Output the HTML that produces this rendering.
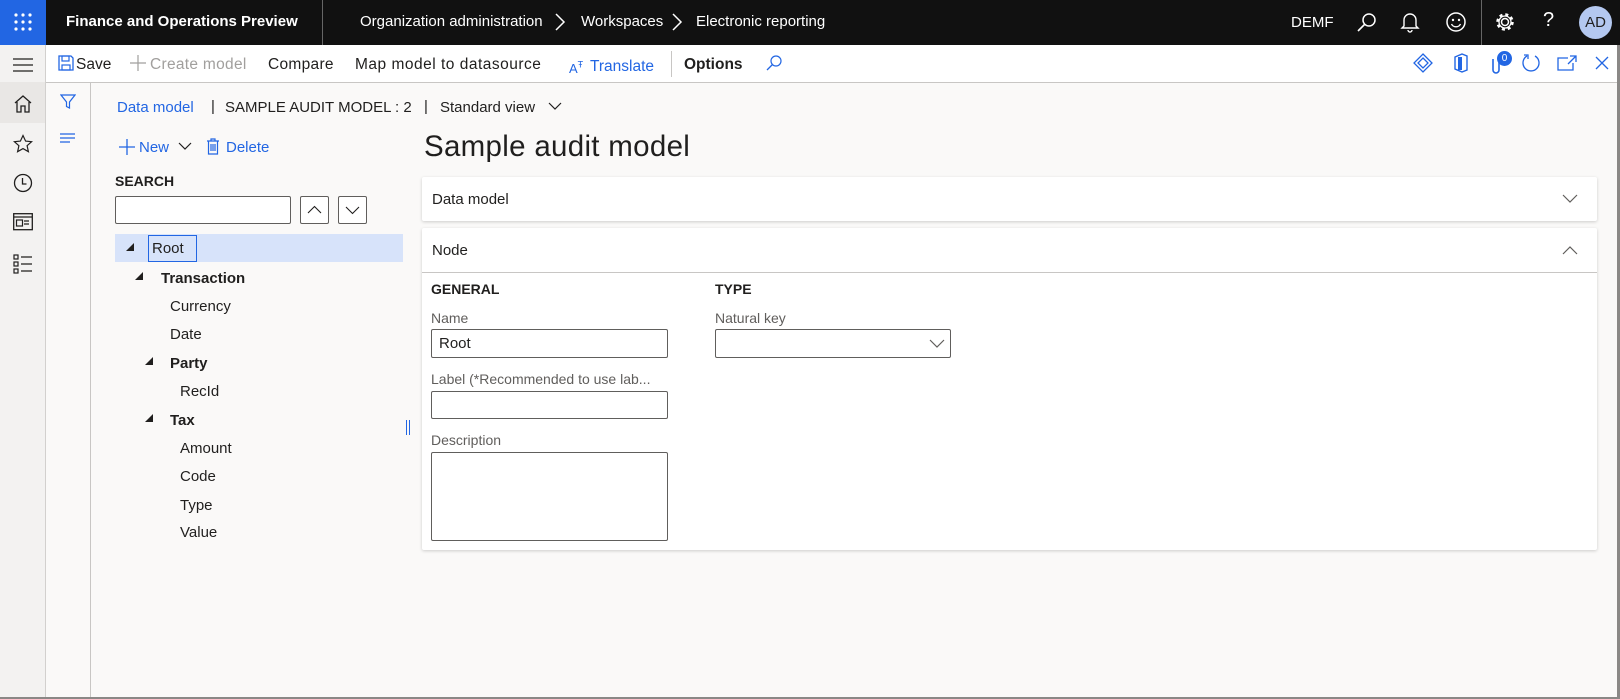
<!DOCTYPE html>
<html><head><meta charset="utf-8"><style>
*{box-sizing:border-box;margin:0;padding:0}
body{width:1620px;height:699px;overflow:hidden;background:#faf9f8;font-family:"Liberation Sans",sans-serif;color:#201f1e;position:relative;font-size:14px}
.a{position:absolute;white-space:nowrap}
.hdr{left:0;top:0;width:1620px;height:45px;background:#111}
.tb{left:46px;top:45px;width:1574px;height:38px;background:#fff;border-bottom:1px solid #c8c6c4}
.tbt{top:56px;font-size:15.5px;color:#201f1e}
.nav{left:0;top:45px;width:46px;height:654px;background:#f3f2f1;border-right:1px solid #d2d0ce}
.fp{left:46px;top:83px;width:45px;height:616px;background:#faf9f8;border-right:1px solid #c8c6c4}
.card{background:#fff;box-shadow:0 1px 3px rgba(0,0,0,.18);border-radius:2px}
.inp{background:#fff;border:1px solid #605e5c;border-radius:2px}
.lbl{font-size:14px;color:#605e5c}
.tr{font-size:15px;color:#201f1e}
.tri{width:0;height:0;border-left:8px solid transparent;border-bottom:8px solid #201f1e}
</style></head><body>
<div class="a hdr"></div>
<div class="a" style="left:0;top:0;width:46px;height:45px;background:#2266e3"></div>
<svg class="a" style="left:13px;top:12px" width="20" height="20"><g fill="#fff"><circle cx="3" cy="3" r="1.6"/><circle cx="10" cy="3" r="1.6"/><circle cx="17" cy="3" r="1.6"/><circle cx="3" cy="10" r="1.6"/><circle cx="10" cy="10" r="1.6"/><circle cx="17" cy="10" r="1.6"/><circle cx="3" cy="17" r="1.6"/><circle cx="10" cy="17" r="1.6"/><circle cx="17" cy="17" r="1.6"/></g></svg>
<div class="a" style="left:66px;top:13px;font-weight:bold;color:#fff;font-size:15px">Finance and Operations Preview</div>
<div class="a" style="left:322px;top:0;width:1px;height:45px;background:#666"></div>
<div class="a" style="left:360px;top:13px;color:#fff;font-size:15px">Organization administration</div>
<svg class="a" style="left:554px;top:12px" width="12" height="20"><path d="M2 2l8 8-8 8" stroke="#fff" stroke-width="1.5" fill="none"/></svg>
<div class="a" style="left:581px;top:13px;color:#fff;font-size:15px">Workspaces</div>
<svg class="a" style="left:671px;top:12px" width="12" height="20"><path d="M2 2l8 8-8 8" stroke="#fff" stroke-width="1.5" fill="none"/></svg>
<div class="a" style="left:696px;top:13px;color:#fff;font-size:15px">Electronic reporting</div>
<div class="a" style="left:1291px;top:14px;color:#fff;font-size:15px">DEMF</div>
<svg class="a" style="left:1356px;top:12px" width="22" height="22"><circle cx="13" cy="8" r="6" stroke="#fff" stroke-width="1.5" fill="none"/><path d="M9 12L2 19" stroke="#fff" stroke-width="1.6"/></svg>
<svg class="a" style="left:1400px;top:11px" width="20" height="22"><path d="M4 15V9a6 6 0 0112 0v6l2 2H2z M8 19a2 2 0 004 0" stroke="#fff" stroke-width="1.4" fill="none"/></svg>
<svg class="a" style="left:1445px;top:11px" width="22" height="22"><circle cx="11" cy="11" r="9" stroke="#fff" stroke-width="1.5" fill="none"/><circle cx="8" cy="9" r="1.2" fill="#fff"/><circle cx="14" cy="9" r="1.2" fill="#fff"/><path d="M6.5 13a5 5 0 009 0" stroke="#fff" stroke-width="1.4" fill="none"/></svg>
<div class="a" style="left:1481px;top:0;width:1px;height:45px;background:#666"></div>
<svg class="a" style="left:1494px;top:11px" width="22" height="22"><circle cx="11" cy="11" r="3.5" stroke="#fff" stroke-width="1.5" fill="none"/><circle cx="11" cy="11" r="7.5" stroke="#fff" stroke-width="2.5" stroke-dasharray="3 2.9" fill="none"/><circle cx="11" cy="11" r="6" stroke="#fff" stroke-width="1.3" fill="none"/></svg>
<div class="a" style="left:1543px;top:9px;color:#fff;font-size:20px">?</div>
<div class="a" style="left:1579px;top:6px;width:33px;height:33px;border-radius:50%;background:#b4c8f0;color:#201f1e;font-size:15px;text-align:center;line-height:33px">AD</div>

<div class="a tb"></div>
<div class="a nav"></div>
<div class="a" style="left:0;top:82px;width:45px;height:41px;background:#e9e7e5"></div>
<svg class="a" style="left:13px;top:57px" width="20" height="16"><path d="M0 2h20M0 8h20M0 14h20" stroke="#201f1e" stroke-width="1.3"/></svg>
<svg class="a" style="left:13px;top:94px" width="20" height="20"><path d="M2 9L10 2l8 7M4 8v10h4v-6h4v6h4V8" stroke="#201f1e" stroke-width="1.3" fill="none"/></svg>
<svg class="a" style="left:13px;top:134px" width="20" height="20"><path d="M10 1.5l2.6 5.6 6 .6-4.5 4 1.3 6-5.4-3.1-5.4 3.1 1.3-6-4.5-4 6-.6z" stroke="#201f1e" stroke-width="1.2" fill="none"/></svg>
<svg class="a" style="left:13px;top:173px" width="20" height="20"><circle cx="10" cy="10" r="8.5" stroke="#201f1e" stroke-width="1.3" fill="none"/><path d="M9.5 5v6h4" stroke="#201f1e" stroke-width="1.3" fill="none"/></svg>
<svg class="a" style="left:13px;top:213px" width="20" height="18"><rect x="0.7" y="0.7" width="18.6" height="16" stroke="#201f1e" stroke-width="1.3" fill="none"/><path d="M1 4h18" stroke="#201f1e" stroke-width="1.3"/><rect x="3.5" y="7" width="6" height="6" stroke="#201f1e" stroke-width="1.2" fill="none"/><path d="M11 8h5M11 11h5" stroke="#201f1e" stroke-width="1.2"/></svg>
<svg class="a" style="left:13px;top:254px" width="20" height="20"><g stroke="#201f1e" stroke-width="1.2" fill="none"><rect x="1" y="1" width="4" height="4"/><rect x="1" y="8" width="4" height="4"/><rect x="1" y="15" width="4" height="4"/><path d="M8 3h11M8 10h11M8 17h11"/></g></svg>
<div class="a fp"></div>
<svg class="a" style="left:60px;top:94px" width="16" height="16"><path d="M1 1h14l-5.5 7v6l-3-1.5V8z" stroke="#2266e3" stroke-width="1.2" fill="none"/></svg>
<svg class="a" style="left:60px;top:133px" width="16" height="10"><path d="M0 1h15M0 5h15M0 9h10" stroke="#2266e3" stroke-width="1.2"/></svg>

<svg class="a" style="left:58px;top:55px" width="16" height="16"><path d="M1 1h12l2 2v12H1z" stroke="#2266e3" stroke-width="1.3" fill="none"/><rect x="4" y="1" width="7" height="5" stroke="#2266e3" stroke-width="1.2" fill="none"/><rect x="4" y="10" width="8" height="5" stroke="#2266e3" stroke-width="1.2" fill="none"/></svg>
<div class="a tbt" style="left:76px">Save</div>
<svg class="a" style="left:130px;top:55px" width="16" height="16"><path d="M8 0v16M0 8h16" stroke="#a19f9d" stroke-width="1.2"/></svg>
<div class="a tbt" style="left:150px;color:#a19f9d;letter-spacing:0.3px">Create model</div>
<div class="a tbt" style="left:268px;letter-spacing:0.3px">Compare</div>
<div class="a tbt" style="left:355px;letter-spacing:0.5px">Map model to datasource</div>
<div class="a" style="left:569px;top:56px;color:#2266e3;font-size:15px;line-height:18px"><span style="font-size:13px">A<sup style="font-size:9px">Ŧ</sup></span></div>
<div class="a tbt" style="left:590px;top:58px;color:#2266e3">Translate</div>
<div class="a" style="left:671px;top:51px;width:1px;height:26px;background:#c8c6c4"></div>
<div class="a tbt" style="left:684px;font-weight:bold">Options</div>
<svg class="a" style="left:765px;top:54px" width="18" height="18"><circle cx="11" cy="7" r="5" stroke="#2266e3" stroke-width="1.2" fill="none"/><path d="M7.5 10.5L2 16" stroke="#2266e3" stroke-width="1.3"/></svg>
<svg class="a" style="left:1413px;top:53px" width="20" height="20"><path d="M10 1l9 9-9 9-9-9z M10 5l5 5-5 5-5-5z" stroke="#2266e3" stroke-width="1.3" fill="none"/></svg>
<svg class="a" style="left:1452px;top:53px" width="18" height="20"><path d="M3 4l7-3 5 2v14l-5 2-7-3z" stroke="#2266e3" stroke-width="1.4" fill="none"/><rect x="6" y="4" width="4" height="13" fill="#2266e3"/></svg>
<svg class="a" style="left:1490px;top:55px" width="12" height="20"><path d="M3 4v11a3 3 0 006 0V3" stroke="#2266e3" stroke-width="1.6" fill="none"/></svg>
<div class="a" style="left:1497px;top:51px;width:15px;height:15px;border-radius:50%;background:#2266e3;color:#fff;font-size:10px;text-align:center;line-height:15px">0</div>
<svg class="a" style="left:1521px;top:53px" width="20" height="20"><path d="M6 3A8 8 0 1014 3" stroke="#2266e3" stroke-width="1.3" fill="none"/><path d="M3 2h4v4" stroke="#2266e3" stroke-width="1.3" fill="none"/></svg>
<svg class="a" style="left:1557px;top:55px" width="20" height="16"><path d="M11 3H1v12h15V8M13 1h6v6M19 1l-8 8" stroke="#2266e3" stroke-width="1.3" fill="none"/></svg>
<svg class="a" style="left:1595px;top:56px" width="14" height="14"><path d="M1 1l12 12M13 1L1 13" stroke="#2266e3" stroke-width="1.3"/></svg>

<div class="a" style="left:117px;top:99px;font-size:15px;color:#2266e3">Data model</div>
<div class="a" style="left:211px;top:98px;font-size:15px">|</div>
<div class="a" style="left:225px;top:99px;font-size:15px">SAMPLE AUDIT MODEL : 2</div>
<div class="a" style="left:424px;top:98px;font-size:15px;color:#201f1e">|</div>
<div class="a" style="left:440px;top:99px;font-size:15px">Standard view</div>
<svg class="a" style="left:548px;top:102px" width="14" height="10"><path d="M1 1l6 6 6-6" stroke="#201f1e" stroke-width="1.2" fill="none"/></svg>

<svg class="a" style="left:119px;top:139px" width="16" height="16"><path d="M8 0v16M0 8h16" stroke="#2266e3" stroke-width="1.3"/></svg>
<div class="a" style="left:139px;top:139px;font-size:15px;color:#2266e3">New</div>
<svg class="a" style="left:178px;top:142px" width="14" height="10"><path d="M1 1l6 6 6-6" stroke="#201f1e" stroke-width="1.2" fill="none"/></svg>
<svg class="a" style="left:206px;top:138px" width="14" height="17"><path d="M1 3h12M5 3V1h4v2M2.5 3v13h9V3M5 6v7M7 6v7M9 6v7" stroke="#2266e3" stroke-width="1.2" fill="none"/></svg>
<div class="a" style="left:226px;top:139px;font-size:15px;color:#2266e3">Delete</div>

<div class="a" style="left:115px;top:173px;font-size:14px;font-weight:bold">SEARCH</div>
<div class="a inp" style="left:115px;top:196px;width:176px;height:28px"></div>
<div class="a inp" style="left:300px;top:196px;width:29px;height:28px"></div>
<svg class="a" style="left:307px;top:205px" width="15" height="9"><path d="M1 8l6.5-6.5L14 8" stroke="#201f1e" stroke-width="1.1" fill="none"/></svg>
<div class="a inp" style="left:338px;top:196px;width:29px;height:28px"></div>
<svg class="a" style="left:345px;top:206px" width="15" height="9"><path d="M1 1l6.5 6.5L14 1" stroke="#201f1e" stroke-width="1.1" fill="none"/></svg>

<div class="a" style="left:115px;top:234px;width:288px;height:28px;background:#d7e3fa"></div>
<div class="a tri" style="left:126px;top:243px"></div>
<div class="a tr" style="left:148px;top:235px;width:49px;height:27px;border:1px solid #2266e3;padding:4px 0 0 3px">Root</div>
<div class="a tri" style="left:135px;top:272px"></div>
<div class="a tr" style="left:161px;top:270px;font-weight:bold">Transaction</div>
<div class="a tr" style="left:170px;top:298px">Currency</div>
<div class="a tr" style="left:170px;top:326px">Date</div>
<div class="a tri" style="left:145px;top:357px"></div>
<div class="a tr" style="left:170px;top:355px;font-weight:bold">Party</div>
<div class="a tr" style="left:180px;top:383px">RecId</div>
<div class="a tri" style="left:145px;top:414px"></div>
<div class="a tr" style="left:170px;top:412px;font-weight:bold">Tax</div>
<div class="a tr" style="left:180px;top:440px">Amount</div>
<div class="a tr" style="left:180px;top:468px">Code</div>
<div class="a tr" style="left:180px;top:497px">Type</div>
<div class="a tr" style="left:180px;top:524px">Value</div>
<div class="a" style="left:406px;top:420px;width:4px;height:15px;border-left:1px solid #2266e3;border-right:1px solid #2266e3"></div>

<div class="a" style="left:424px;top:130px;font-size:29.5px;color:#201f1e;letter-spacing:0.3px">Sample audit model</div>
<div class="a card" style="left:422px;top:177px;width:1175px;height:44px"></div>
<div class="a" style="left:432px;top:191px;font-size:15px">Data model</div>
<svg class="a" style="left:1562px;top:194px" width="16" height="10"><path d="M1 1l7 7 7-7" stroke="#605e5c" stroke-width="1.2" fill="none"/></svg>
<div class="a card" style="left:422px;top:228px;width:1175px;height:322px"></div>
<div class="a" style="left:422px;top:272px;width:1175px;height:1px;background:#c8c6c4"></div>
<div class="a" style="left:432px;top:242px;font-size:15px">Node</div>
<svg class="a" style="left:1562px;top:245px" width="16" height="10"><path d="M1 9l7-7 7 7" stroke="#605e5c" stroke-width="1.2" fill="none"/></svg>
<div class="a" style="left:431px;top:281px;font-size:14px;font-weight:bold">GENERAL</div>
<div class="a" style="left:715px;top:281px;font-size:14px;font-weight:bold">TYPE</div>
<div class="a lbl" style="left:431px;top:310px">Name</div>
<div class="a inp" style="left:431px;top:329px;width:237px;height:29px;padding:5px 0 0 7px;font-size:15px">Root</div>
<div class="a lbl" style="left:431px;top:371px">Label (*Recommended to use lab...</div>
<div class="a inp" style="left:431px;top:391px;width:237px;height:28px"></div>
<div class="a lbl" style="left:431px;top:432px">Description</div>
<div class="a inp" style="left:431px;top:452px;width:237px;height:89px"></div>
<div class="a lbl" style="left:715px;top:310px">Natural key</div>
<div class="a inp" style="left:715px;top:329px;width:236px;height:29px"></div>
<svg class="a" style="left:929px;top:339px" width="16" height="10"><path d="M1 1l7 7 7-7" stroke="#605e5c" stroke-width="1.2" fill="none"/></svg>
<div class="a" style="left:1617px;top:45px;width:3px;height:654px;background:#8a8886"></div>
<div class="a" style="left:0;top:697px;width:1620px;height:2px;background:#8a8886"></div>
</body></html>
